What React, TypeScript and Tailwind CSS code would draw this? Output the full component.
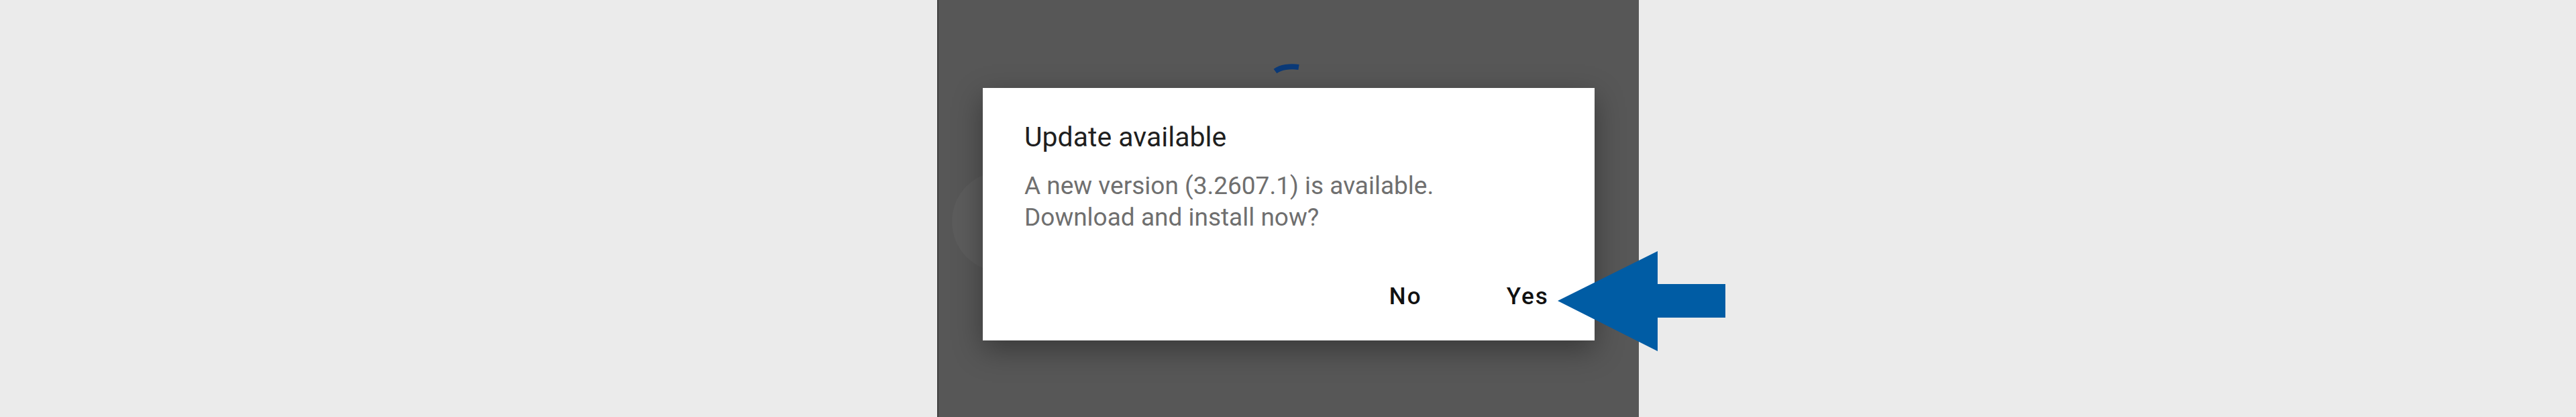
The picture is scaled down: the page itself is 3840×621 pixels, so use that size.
import React from "react";

function Spinner() {
  return (
    <svg
      className="absolute left-[498px] top-[88px]"
      width="44"
      height="24"
      viewBox="0 0 44 24"
    >
      <path
        d="M4 18 C 12 12, 26 10, 39 12"
        fill="none"
        stroke="#0b3a78"
        strokeWidth="8"
        strokeLinecap="butt"
      />
    </svg>
  );
}

function UpdateDialog() {
  return (
    <div className="w-[912px] h-[376px] bg-white shadow-[0_14px_40px_rgba(0,0,0,0.35)] flex flex-col pl-[62px] pr-[68px] pt-[49px] pb-[43px]">
      <p className="text-[41px] leading-[48px] text-[#1f1f1f]">Update available</p>
      <div className="mt-[25px] text-[37px] leading-[47px] text-[#6f6f6f]">
        <p>A new version (3.2607.1) is available.</p>
        <p>Download and install now?</p>
      </div>
      <div className="mt-auto flex justify-end items-center gap-[126px] text-[35px] leading-[45px] font-medium tracking-[0.06em] text-[#111]">
        <button type="button">No</button>
        <button type="button">Yes</button>
      </div>
    </div>
  );
}

export default function App() {
  return (
    <div
      className="relative w-full h-[621px] bg-[#ebebeb] flex justify-center overflow-hidden"
      style={{ fontFamily: "Roboto, 'Liberation Sans', sans-serif" }}
    >
      <div className="relative w-[1046px] h-full bg-[#575757] border-l-2 border-[#3e3e3e] pl-[66px] pt-[131px]">
        <Spinner />
        <div className="absolute left-[20px] top-[255px] w-[150px] h-[150px] rounded-full bg-[#5c5c5c]" />
        <div className="relative">
          <UpdateDialog />
        </div>
      </div>
      <svg
        className="absolute left-[2322px] top-[374px]"
        width="250"
        height="149"
        viewBox="0 0 250 149"
      >
        <polygon
          points="0,74 149,0 149,49 250,49 250,99 149,99 149,149"
          fill="#005ca4"
        />
      </svg>
    </div>
  );
}
